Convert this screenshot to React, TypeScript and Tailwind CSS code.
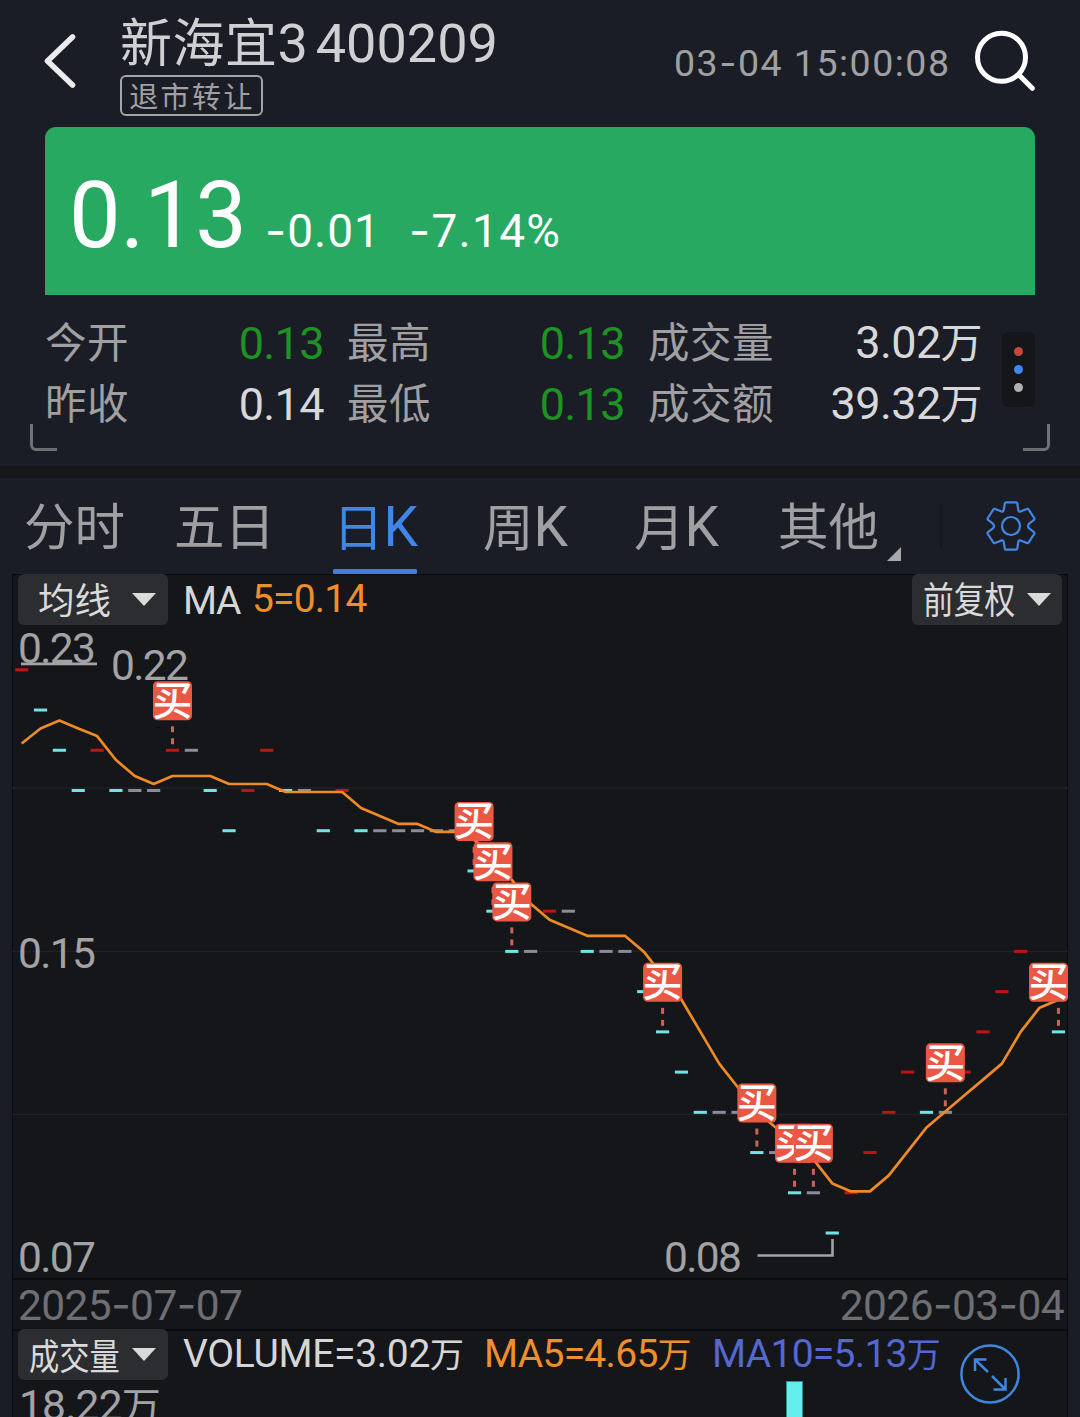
import React from "react";

type Tone = "r" | "c" | "g";

const SANS = "font-['Roboto','Noto_Sans_CJK_SC',sans-serif]";

/* Closing price in cents and tone (r = up, c = down, g = flat) for each day. */
const DAYS: [number, Tone][] = [
  [22, "r"], [21, "c"], [20, "c"], [19, "c"], [20, "r"], [19, "c"], [19, "g"], [19, "g"],
  [20, "r"], [20, "g"], [19, "c"], [18, "c"], [19, "r"], [20, "r"], [19, "c"], [19, "g"],
  [18, "c"], [19, "r"], [18, "c"], [18, "g"], [18, "g"], [18, "g"], [18, "g"], [18, "g"],
  [17, "c"], [16, "c"], [15, "c"], [15, "g"], [16, "r"], [16, "g"], [15, "c"], [15, "g"],
  [15, "g"], [14, "c"], [13, "c"], [12, "c"], [11, "c"], [11, "g"], [11, "g"], [10, "c"],
  [10, "g"], [9, "c"], [9, "g"], [8, "c"], [9, "r"], [10, "r"], [11, "r"], [12, "r"],
  [11, "c"], [11, "g"], [12, "r"], [13, "r"], [14, "r"], [15, "r"], [14, "c"], [13, "c"],
];
const BUYS = [8, 24, 25, 26, 34, 39, 41, 42, 49, 55];
const TONES: Record<Tone, string> = { r: "#c01414", c: "#70e4e6", g: "#8a8c9a" };

const TOP = 625;
const LEFT = 12;
const dayX = (i: number) => 21.7 + 18.85 * i - LEFT;
const priceY = (p: number) => 669.8 + (22 - p) * 40.23 - TOP;
const maY = (p: number) => {
  const y = priceY(p);
  return y + 1.6 - (y - 151) * 0.0072;
};

const EARLY_MA = [743.5, 728.5, 720.5, 728.5];
const maPoints = DAYS.map((_, i) => {
  const y =
    i < 4
      ? EARLY_MA[i] - TOP
      : maY(DAYS.slice(i - 4, i + 1).reduce((s, d) => s + d[0], 0) / 5);
  return `${dayX(i).toFixed(1)},${y.toFixed(1)}`;
}).join(" ");

/* Numeric text whose hyphens are drawn with the wider Inter dash. */
function Num({ children }: { children: string }) {
  return (
    <>
      {children.split(/(-)/).map((part, i) =>
        part === "-" ? (
          <span key={i} className="font-['Inter']">-</span>
        ) : (
          part
        ),
      )}
    </>
  );
}

function Buy({ day }: { day: number }) {
  const cx = dayX(day);
  const cy = priceY(DAYS[day][0]);
  const left = Math.min(cx - 19.5, 1017);
  return (
    <g>
      <rect x={cx - 1.5} y={cy - 24} width={3} height={6} fill="#cc6258" />
      <rect x={cx - 1.5} y={cy - 12} width={3} height={6} fill="#cc6258" />
      <rect x={left} y={cy - 69} width={39} height={39} rx={4.5} fill="#ea5844" />
      <text x={left + 19.5} y={cy - 35.5} fontSize={40} fontWeight={500} textAnchor="middle" fill="#fff">
        买
      </text>
    </g>
  );
}

function Label({ x, y, w, children }: { x: number; y: number; w: number; children: string }) {
  return (
    <text x={x - LEFT} y={y - TOP} fontSize={42.5} textLength={w} fill="#a3a3a5">
      {children}
    </text>
  );
}

function KChart() {
  return (
    <svg width={1056} height={653} viewBox="0 0 1056 653" className="block overflow-visible">
      {[788, 951.5, 1114.5].map((y) => (
        <line key={y} x1={0} x2={1056} y1={y - TOP} y2={y - TOP} stroke="#212227" strokeWidth={1.5} />
      ))}
      <Label x={18} y={968} w={78}>0.15</Label>
      <Label x={18} y={1272} w={78}>0.07</Label>
      {DAYS.map(([p, tone], i) => (
        <rect key={i} x={dayX(i) - 6.6} y={priceY(p) - 1.5} width={13.2} height={3} fill={TONES[tone]} />
      ))}
      <polyline points={maPoints} fill="none" stroke="#ee8b23" strokeWidth={2.7} strokeLinejoin="round" />
      {BUYS.map((d) => (
        <Buy key={d} day={d} />
      ))}
      <Label x={18} y={662.5} w={78}>0.23</Label>
      <rect x={9} y={37.5} width={76} height={2.8} fill="#a3a3a5" />
      <Label x={111} y={679.5} w={78}>0.22</Label>
      <Label x={664} y={1272} w={78}>0.08</Label>
      <polyline points="745.5,630.5 820.5,630.5 820.5,614" fill="none" stroke="#a3a3a5" strokeWidth={2.6} />
    </svg>
  );
}

function Caret() {
  return (
    <svg width={24} height={13} viewBox="0 0 24 13" className="shrink-0">
      <path d="M0 0H24L12 13Z" fill="#dadada" />
    </svg>
  );
}

function Stat({ label, value, tone, w }: { label: string; value: string; tone: string; w: string }) {
  return (
    <div className={`flex items-center justify-between ${w}`}>
      <span className="text-[41.5px] tracking-[0.5px] text-[#a0a0a3]">{label}</span>
      <span className={`text-[45px] tracking-[-0.6px] ${tone}`}>
        {value.replace("万", "")}
        {value.endsWith("万") && <span className="text-[42px]">万</span>}
      </span>
    </div>
  );
}

function Gear() {
  return (
    <svg width={54} height={54} viewBox="984 499 54 54" fill="none" stroke="#4287e2" strokeWidth={2.2} strokeLinejoin="round">
      <path d="M1004.8 503.3Q1005 502.3 1006 502.3H1016Q1017 502.3 1017.3 503.3L1018.3 510.3Q1018.7 512 1020.5 511.6L1026.8 509Q1028 508.6 1028.7 509.6L1034.2 518Q1034.8 519 1034 519.8L1028.8 523.8Q1027.3 526 1028.8 528.2L1034 532.2Q1034.8 533 1034.2 534L1028.7 542.4Q1028 543.4 1026.8 543L1020.5 540.4Q1018.7 540 1018.3 541.7L1017.3 548.7Q1017 549.7 1016 549.7H1006Q1005 549.7 1004.8 548.7L1003.7 541.7Q1003.3 540 1001.5 540.4L995.2 543Q994 543.4 993.3 542.4L987.8 534Q987.2 533 988 532.2L993.2 528.2Q994.7 526 993.2 523.8L988 519.8Q987.2 519 987.8 518L993.3 509.6Q994 508.6 995.2 509L1001.5 511.6Q1003.3 512 1003.7 510.3Z" />
      <circle cx={1011} cy={526} r={9} />
    </svg>
  );
}

export default function App() {
  return (
    <div className={`h-[1417px] w-[1080px] overflow-hidden bg-[#1b1d26] ${SANS} text-[#a0a0a3]`}>
      <header className="flex h-[127px]">
        <svg width={120} height={127} viewBox="0 0 120 127" fill="none" className="shrink-0">
          <path d="M72.5 37L47.5 61L72.5 85" stroke="#ececec" strokeWidth={5.6} strokeLinecap="round" strokeLinejoin="round" />
        </svg>
        <div className="w-[554px]">
          <h1 className="mt-[13px] h-[62px] whitespace-pre leading-[61px] text-[#d0d0d2]">
            <span className="text-[52px] tracking-[0.5px]">新海宜</span>
            <span className="text-[54px] [word-spacing:-5.5px]">3 400209</span>
          </h1>
          <div className="flex h-[41px] w-[143px] items-center justify-center rounded-[6px] border-2 border-[#a5a5a8] pl-[1px] pt-[5px] text-[29px] leading-[37px] tracking-[2.4px]">
            退市转让
          </div>
        </div>
        <span className="w-[298px] whitespace-pre pt-[3px] text-[37.5px] leading-[120px] tracking-[1.5px]">
          <Num>03-04 15:00:08</Num>
        </span>
        <svg width={70} height={127} viewBox="972 0 70 127" fill="none" stroke="#fff" className="shrink-0">
          <circle cx={1001.5} cy={57.3} r={24} strokeWidth={5} />
          <path d="M1019.5 75.5L1032.3 88.3" strokeWidth={5} strokeLinecap="round" />
        </svg>
      </header>

      <section className="mx-[45px] flex h-[168px] items-baseline rounded-t-[11px] bg-[#27a961] pl-[24px] leading-[178px] text-white">
        <span className="w-[196px] text-[92px] tracking-[-0.5px]">0.13</span>
        <span className="w-[144px] text-[46px] tracking-[1px]"><Num>-0.01</Num></span>
        <span className="text-[46px] tracking-[1.3px]"><Num>-7.14%</Num></span>
      </section>

      <section className="flex h-[171px] pt-[18px]">
        <div className="flex w-[30px] shrink-0" />
        <div className="relative flex h-[138px] w-[1020px] pl-[15px]">
          <div className="flex flex-col leading-[60px]">
            <div className="flex gap-[23px]">
              <Stat label="今开" value="0.13" tone="text-[#1d9322]" w="w-[279px]" />
              <Stat label="最高" value="0.13" tone="text-[#1d9322]" w="w-[278px]" />
              <Stat label="成交量" value="3.02万" tone="text-[#d8d8da]" w="w-[334px]" />
            </div>
            <div className="flex gap-[23px]">
              <Stat label="昨收" value="0.14" tone="text-[#d8d8da]" w="w-[279px]" />
              <Stat label="最低" value="0.13" tone="text-[#1d9322]" w="w-[278px]" />
              <Stat label="成交额" value="39.32万" tone="text-[#d8d8da]" w="w-[334px]" />
            </div>
          </div>
          <div className="ml-[20px] mt-[19px] flex h-[75px] w-[33px] flex-col items-center justify-center gap-[9px] rounded-[6px] bg-[#15161a]">
            <i className="size-[9px] rounded-full bg-[#c5483a]" />
            <i className="size-[9px] rounded-full bg-[#3f86ee]" />
            <i className="size-[9px] rounded-full bg-[#b0b0b3]" />
          </div>
          <i className="absolute bottom-0 left-0 size-[27px] rounded-bl-[6px] border-b-[3px] border-l-[3px] border-[#6f7075]" />
          <i className="absolute bottom-0 right-0 size-[27px] rounded-br-[6px] border-b-[3px] border-r-[3px] border-[#6f7075]" />
        </div>
      </section>

      <div className="h-[12px] bg-[#16171b]" />

      <nav className="flex h-[96px] pl-[24px] text-[50.5px] leading-[99px]">
        <span className="w-[150px]">分时</span>
        <span className="w-[159px]">五日</span>
        <div className="flex h-[96px] w-[84px] flex-col text-[#4086e6]">
          <span className="h-[91px] whitespace-nowrap">日<span className="text-[55px]">K</span></span>
          <i className="h-[5px] rounded-[1.5px] bg-[#3f80dd]" />
        </div>
        <span className="ml-[66px] w-[151px]">周<span className="text-[55px]">K</span></span>
        <span className="w-[144px]">月<span className="text-[55px]">K</span></span>
        <span className="w-[109px]">其他</span>
        <svg width={14} height={14} viewBox="0 0 14 14" className="mt-[69px]">
          <path d="M14 0V14H0Z" fill="#a8a8aa" />
        </svg>
        <i className="ml-[39px] mt-[26px] h-[45px] w-[2px] bg-[#15171d]" />
        <div className="ml-[42px] mt-[21px]"><Gear /></div>
      </nav>

      <main className="mx-[12px] h-[843px] bg-[#15161a] shadow-[inset_1px_1px_0_#08090c,inset_-1px_0_0_#08090c]">
        <div className="flex h-[51px] items-center pl-[6px] pr-[6px] text-[39px] leading-[51px]">
          <div className="flex h-[51px] w-[150px] items-center rounded-[6px] bg-[#2c2d31] pl-[20px] text-[36.5px] text-[#dadada]">
            <span className="w-[94px] pt-[4px]">均线</span>
            <Caret />
          </div>
          <span className="ml-[15px] w-[69px] pt-[3px] tracking-[-1.5px] text-[#d6d6d8]">MA</span>
          <span className="tracking-[-0.8px] text-[#ee8f2b]">5=0.14</span>
          <div className="ml-auto flex h-[51px] w-[150px] items-center rounded-[6px] bg-[#2c2d31] pl-[11px] text-[37px] text-[#dadada]">
            <span className="w-[104px] origin-left scale-x-[0.83] whitespace-nowrap pt-[4px]">前复权</span>
            <Caret />
          </div>
        </div>

        <KChart />

        <div className="flex h-[51px] items-center justify-between border-t-2 border-[#0a0b0e] pl-[6px] pr-[4px] text-[42.5px] leading-[51px] tracking-[-0.6px] text-[#6e6f73]">
          <span><Num>2025-07-07</Num></span>
          <span><Num>2026-03-04</Num></span>
        </div>

        <div className="flex h-[88px] border-t-2 border-[#0a0b0e] pl-[6px] text-[39px] leading-[51px]">
          <div className="-mt-[2px] flex w-[165px] shrink-0 flex-col">
            <div className="flex h-[51px] w-[150px] items-center rounded-[6px] bg-[#2c2d31] pl-[11px] text-[36.5px] text-[#dadada]">
              <span className="w-[103px] origin-left scale-x-[0.83] whitespace-nowrap pt-[5px]">成交量</span>
              <Caret />
            </div>
            <span className="whitespace-nowrap pl-[1px] text-[42.5px] leading-[51px] tracking-[-0.8px] text-[#a3a3a5]">
              18.22<span className="text-[39px]">万</span>
            </span>
          </div>
          <div className="-mt-[2px] flex w-[777px] shrink-0 flex-col">
            <div className="flex h-[53px] whitespace-nowrap">
              <span className="w-[301px] tracking-[-0.3px] text-[#d6d6d8]">VOLUME=3.02<span className="text-[34px]">万</span></span>
              <span className="w-[228px] tracking-[-0.7px] text-[#ee8f2b]">MA5=4.65<span className="text-[34px]">万</span></span>
              <span className="tracking-[-0.7px] text-[#5468cf]">MA10=5.13<span className="text-[34px]">万</span></span>
            </div>
            <i className="ml-[603px] h-[36px] w-[17px] border-x border-t border-[#2f8f92] bg-[#62efee]" />
          </div>
          <svg width={60} height={60} viewBox="960 1344 60 60" fill="none" stroke="#3f86e0" strokeWidth={2.5} className="mt-[13px] shrink-0">
            <circle cx={990} cy={1374} r={28.6} />
            <path d="M975 1371V1359.5H986.5M975.5 1360L988 1372M992 1376L1005 1389M993.5 1389.5H1005.5V1378" />
          </svg>
        </div>
      </main>
    </div>
  );
}
